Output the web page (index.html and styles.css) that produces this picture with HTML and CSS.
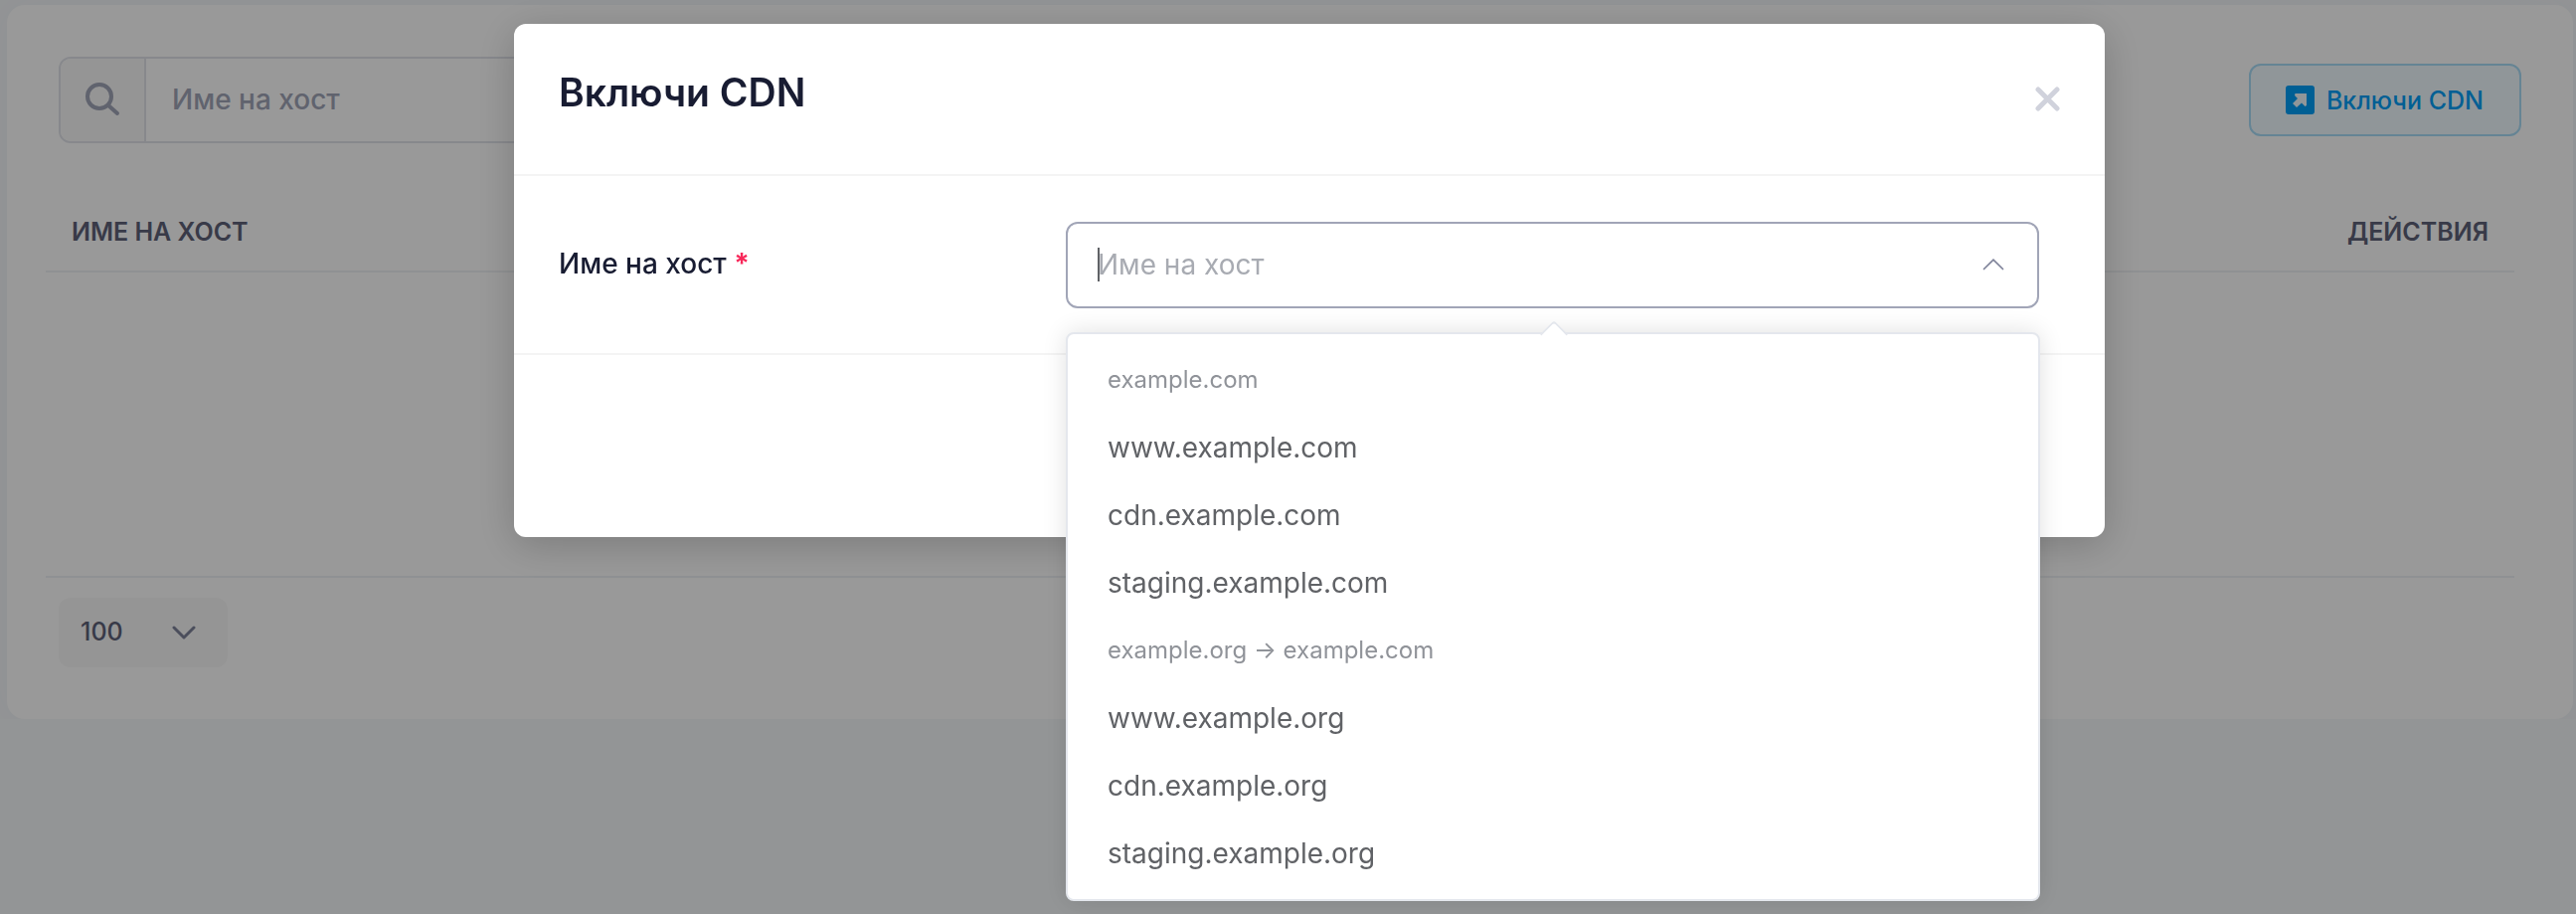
FILE: index.html
```html
<!DOCTYPE html>
<html lang="bg">
<head>
    <meta charset="UTF-8">
    <meta name="viewport" content="width=device-width, initial-scale=1.0">
    <title>Включи CDN</title>
    <link rel="stylesheet" href="styles.css">
</head>
<body>
    <main class="card">
        <div class="toolbar">
            <div class="search">
                <label class="search-icon" for="search" aria-label="Търсене">
                    <svg width="36" height="36" viewBox="0 0 36 36" fill="none" stroke="currentColor" stroke-width="4" stroke-linecap="round">
                        <circle cx="15" cy="14" r="12"/>
                        <path d="M24 23l9 8"/>
                    </svg>
                </label>
                <input class="search-input" id="search" type="text" placeholder="Име на хост">
            </div>
            <button class="btn-cdn" type="button">
                <svg width="29" height="29" viewBox="0 0 29 29">
                    <rect width="29" height="29" rx="3" fill="currentColor"/>
                    <path class="btn-arrow" d="M9.5 8H21v12l-1.5 1-3.5-3.5-5 4.5-4-4 5-5-3-3z"/>
                </svg>
                Включи CDN
            </button>
        </div>

        <table class="hosts">
            <thead>
                <tr>
                    <th>Име на хост</th>
                    <th class="actions">Действия</th>
                </tr>
            </thead>
            <tbody>
                <tr><td colspan="2"></td></tr>
            </tbody>
        </table>

        <div class="page-size">
            <select class="page-select" aria-label="Брой на страница">
                <option>100</option>
            </select>
            <svg class="page-chevron" width="24" height="14" viewBox="0 0 24 14" fill="none" stroke="currentColor" stroke-width="3" stroke-linecap="round" stroke-linejoin="round">
                <path d="M2 2l10 10L22 2"/>
            </svg>
        </div>
    </main>

    <div class="overlay">
        <div class="modal" role="dialog" aria-modal="true" aria-labelledby="modal-title">
            <div class="modal-header">
                <h2 class="modal-title" id="modal-title">Включи CDN</h2>
                <button class="modal-close" type="button" aria-label="Затвори">
                    <svg width="25" height="25" viewBox="0 0 25 25" stroke="currentColor" stroke-width="5" stroke-linecap="round">
                        <path d="M3 3l19 19M22 3L3 22"/>
                    </svg>
                </button>
            </div>
            <div class="modal-body">
                <label class="field-label" for="host">Име на хост <span class="required">*</span></label>
                <div class="field">
                    <input class="field-input" id="host" type="text" placeholder="Име на хост" role="combobox" aria-expanded="true" aria-controls="host-list" autocomplete="off">
                    <span class="caret"></span>
                    <svg class="field-chevron" width="22" height="12" viewBox="0 0 22 12" fill="none" stroke="currentColor" stroke-width="1.7" stroke-linecap="round">
                        <path d="M1.5 10.5L11 1.2l9.5 9.3"/>
                    </svg>
                    <div class="dropdown">
                        <ul class="dropdown-list" id="host-list" role="listbox">
                            <li class="group">example.com</li>
                            <li class="option" role="option">www.example.com</li>
                            <li class="option" role="option">cdn.example.com</li>
                            <li class="option" role="option">staging.example.com</li>
                            <li class="group">example.org → example.com</li>
                            <li class="option" role="option">www.example.org</li>
                            <li class="option" role="option">cdn.example.org</li>
                            <li class="option" role="option">staging.example.org</li>
                        </ul>
                    </div>
                </div>
            </div>
            <div class="modal-footer"></div>
        </div>
    </div>
</body>
</html>
```
FILE: styles.css
```css
* {
    box-sizing: border-box;
}

body {
    margin: 0;
    padding: 5px 3px 0 7px;
    background-color: #f5f8fa;
    color: #181c32;
    font-family: Inter, "Liberation Sans", sans-serif;
    font-size: 28px;
}

input, select, button {
    font-family: inherit;
}

.card {
    background-color: #fff;
    border-radius: 18px;
    box-shadow: 0 0 40px rgba(76, 87, 125, 0.04);
    padding: 52px 52px 52px 39px;
}

.toolbar {
    display: flex;
    align-items: center;
    justify-content: space-between;
    padding-left: 13px;
}

.search {
    display: flex;
    width: 700px;
    height: 87px;
    border: 2px solid #e1e3ea;
    border-radius: 12px;
    overflow: hidden;
}

.search-icon {
    display: flex;
    align-items: center;
    justify-content: center;
    width: 86px;
    background-color: #f9f9f9;
    border-right: 2px solid #e1e3ea;
    color: #a1a5b7;
}

.search-input {
    flex: 1;
    border: none;
    outline: none;
    padding: 0 26px 2px;
    font-size: 28px;
    font-weight: 500;
    background: none;
}

.search-input::placeholder {
    color: #a1a5b7;
}

.btn-cdn {
    display: flex;
    align-items: center;
    gap: 12px;
    height: 73px;
    padding: 0 36px 0 35px;
    border: 2px solid #a8dcf7;
    border-radius: 12px;
    background-color: #f1faff;
    color: #009ef7;
    font-size: 25px;
    font-weight: 500;
}

.btn-arrow {
    fill: #f1faff;
}

/* Таблица с хостове */
.hosts {
    width: calc(100% - 7px);
    margin-top: 36px;
    border-collapse: collapse;
}

.hosts th {
    height: 93px;
    padding: 20px 26px 6px;
    border-bottom: 2px solid #eff2f5;
    color: #5e6278;
    font-size: 25px;
    font-weight: 600;
    text-align: left;
    text-transform: uppercase;
}

.hosts .actions {
    text-align: right;
}

.hosts td {
    height: 307px;
    padding: 0;
    border-bottom: 2px solid #eff2f5;
}

.page-size {
    position: relative;
    width: 170px;
    margin: 20px 0 0 13px;
}

.page-select {
    display: block;
    appearance: none;
    width: 100%;
    height: 70px;
    padding: 0 22px 2px;
    border: none;
    border-radius: 12px;
    background-color: #f9f9f9;
    color: #5e6278;
    font-size: 25px;
    font-weight: 500;
}

.page-chevron {
    position: absolute;
    top: 28px;
    right: 32px;
    color: #7e8299;
    pointer-events: none;
}

/* Модален прозорец */
.overlay {
    position: fixed;
    inset: 0;
    padding: 24px 0 0 43px;
    background-color: rgba(0, 0, 0, 0.4);
}

.modal {
    max-width: 1600px;
    margin: 0 auto;
    background-color: #fff;
    border-radius: 12px;
    box-shadow: 0 8px 40px rgba(0, 0, 0, 0.2);
}

.modal-header {
    display: flex;
    align-items: center;
    justify-content: space-between;
    height: 153px;
    padding: 0 45px;
    border-bottom: 2px solid #f4f4f4;
}

.modal-title {
    margin: 0 0 14px;
    font-size: 39px;
    font-weight: 600;
}

.modal-close {
    display: flex;
    padding: 0;
    border: none;
    background: none;
    color: #d0d2dc;
}

.modal-body {
    display: flex;
    align-items: center;
    justify-content: space-between;
    padding: 46px 66px 45px 45px;
    border-bottom: 2px solid #f4f4f4;
}

.field-label {
    padding-bottom: 3px;
    font-weight: 500;
}

.required {
    color: #f8285a;
    font-weight: 700;
}

.field {
    position: relative;
    width: 979px;
}

.field-input {
    display: block;
    width: 100%;
    height: 87px;
    padding: 0 72px 2px 30px;
    border: 2px solid #a1a5b7;
    border-radius: 12px;
    outline: none;
    font-size: 28px;
}

.field-input::placeholder {
    color: #a8abb2;
}

.caret {
    position: absolute;
    top: 26px;
    left: 32px;
    width: 2px;
    height: 34px;
    background-color: #606266;
}

.field-chevron {
    position: absolute;
    top: 37px;
    right: 35px;
    color: #7e8299;
}

.dropdown {
    position: absolute;
    top: 111px;
    left: 0;
    right: -1px;
    background-color: #fff;
    border: 2px solid #e4e7ed;
    border-radius: 8px;
    box-shadow: 0 0 24px rgba(0, 0, 0, 0.12);
}

.dropdown::before {
    content: "";
    position: absolute;
    top: -10px;
    left: 50%;
    width: 18px;
    height: 18px;
    margin-left: -9px;
    background-color: #fff;
    border-top: 2px solid #e4e7ed;
    border-left: 2px solid #e4e7ed;
    border-top-left-radius: 4px;
    transform: rotate(45deg);
}

.dropdown-list {
    list-style: none;
    margin: 0;
    padding: 12px 0;
}

.group, .option {
    padding: 0 40px;
    line-height: 68px;
}

.group {
    color: #909399;
    font-size: 24px;
}

.option {
    color: #606266;
}

.modal-footer {
    height: 183px;
}
```
